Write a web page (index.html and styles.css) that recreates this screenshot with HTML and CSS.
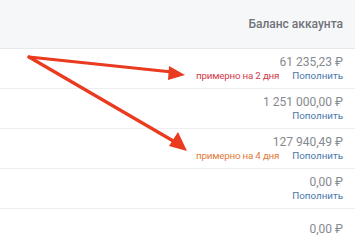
FILE: index.html
```html
<!DOCTYPE html>
<html lang="ru">

<head>
    <meta charset="UTF-8" />
    <meta name="viewport" content="width=device-width, initial-scale=1.0" />
    <title>Баланс аккаунта</title>
    <link rel="stylesheet" href="styles.css">
</head>

<body>
    <div class="table">
        <div class="table-head">Баланс аккаунта</div>

        <div class="row">
            <div class="amount">61 235,23 ₽</div>
            <div class="row-links">
                <span class="forecast forecast-red">примерно на 2 дня</span>
                <a class="topup" href="#">Пополнить</a>
            </div>
        </div>

        <div class="row">
            <div class="amount">1 251 000,00 ₽</div>
            <div class="row-links">
                <a class="topup" href="#">Пополнить</a>
            </div>
        </div>

        <div class="row">
            <div class="amount">127 940,49 ₽</div>
            <div class="row-links">
                <span class="forecast forecast-orange">примерно на 4 дня</span>
                <a class="topup" href="#">Пополнить</a>
            </div>
        </div>

        <div class="row">
            <div class="amount">0,00 ₽</div>
            <div class="row-links">
                <a class="topup" href="#">Пополнить</a>
            </div>
        </div>

        <div class="row">
            <div class="amount">0,00 ₽</div>
        </div>
    </div>

    <!-- стрелки поверх таблицы -->
    <svg class="arrows" width="355" height="249" viewBox="0 0 355 249">
        <g stroke="#ea3a1f" stroke-width="3.2" stroke-linecap="round" fill="none">
            <line x1="29" y1="57" x2="172" y2="72" />
            <line x1="29" y1="57" x2="175" y2="142" />
        </g>
        <g fill="#ea3a1f">
            <polygon points="185,75 169,66 168,80" />
            <polygon points="187,151 169,146 178,132" />
        </g>
    </svg>
</body>

</html>
```

FILE: styles.css
```css
body {
    margin: 0;
    font-family: Roboto, "Open Sans", "Liberation Sans", sans-serif;
    background: #ffffff;
    color: #777c84;
    width: 355px;
    height: 249px;
    overflow: hidden;
    position: relative;
}

.table {
    display: flex;
    flex-direction: column;
}

.table-head {
    height: 48px;
    background: #f6f7f9;
    border-bottom: 1px solid #e7e8ec;
    display: flex;
    align-items: center;
    justify-content: flex-end;
    padding-right: 12px;
    font-size: 12px;
    font-weight: 500;
    color: #6f7378;
}

.row {
    height: 39px;
    border-bottom: 1px solid #eceef1;
    display: flex;
    flex-direction: column;
    align-items: flex-end;
    justify-content: center;
    padding-right: 12px;
}

.row:last-child {
    border-bottom: none;
    height: 40px;
}

.amount {
    font-size: 12px;
    line-height: 14px;
    color: #858a90;
}

.row-links {
    display: flex;
    gap: 13px;
    font-size: 9.8px;
    line-height: 14px;
}

.forecast {
    letter-spacing: -0.2px;
}

.forecast-red {
    color: #d23a4a;
}

.forecast-orange {
    color: #e27b3a;
}

.topup {
    color: #4a76a8;
    text-decoration: none;
}

.arrows {
    position: absolute;
    top: 0;
    left: 0;
    pointer-events: none;
}
```
